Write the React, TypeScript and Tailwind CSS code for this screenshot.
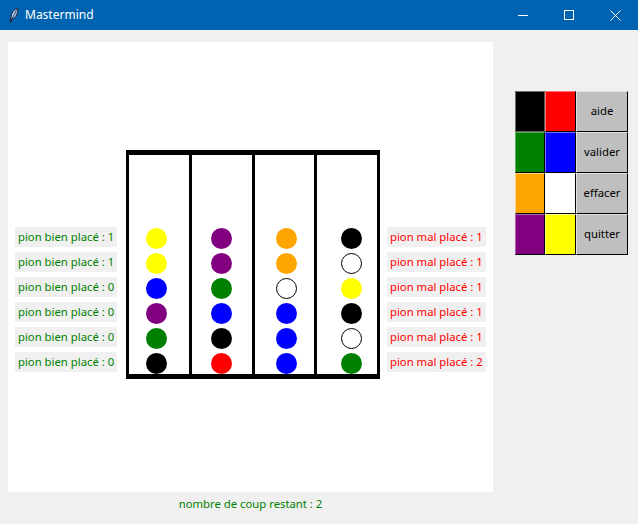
import React from 'react'

type Peg = 'yellow' | 'blue' | 'purple' | 'green' | 'black' | 'red' | 'orange' | 'white'

const pegClass: Record<Peg, string> = {
  yellow: 'bg-[#ffff00]',
  blue: 'bg-[#0000ff]',
  purple: 'bg-[#800080]',
  green: 'bg-[#008000]',
  black: 'bg-black',
  red: 'bg-[#ff0000]',
  orange: 'bg-[#ffa500]',
  white: 'bg-white border border-black',
}

// colonnes du plateau, de haut en bas
const columns: { pegs: Peg[]; cls: string }[] = [
  { pegs: ['yellow', 'yellow', 'blue', 'purple', 'green', 'black'], cls: 'w-[60px] pl-[17px]' },
  { pegs: ['purple', 'purple', 'green', 'blue', 'black', 'red'], cls: 'w-[63px] pl-[19px] border-l-[3px] border-black' },
  { pegs: ['orange', 'orange', 'white', 'blue', 'blue', 'blue'], cls: 'w-[62px] pl-[21px] border-l-[3px] border-black' },
  { pegs: ['black', 'white', 'yellow', 'black', 'white', 'green'], cls: 'w-[63px] pl-[24px] border-l-[3px] border-black' },
]

const bien = [1, 1, 0, 0, 0, 0]
const mal = [1, 1, 1, 1, 1, 2]

const swatchRows = [
  {
    a: 'bg-black border-t-[#6e6e6e] border-l-[#6e6e6e] border-r-[#5a5a5a] border-b-[#5a5a5a]',
    b: 'bg-[#ff0000] border-t-[#ff7070] border-l-[#ff7070] border-r-black border-b-black',
    label: 'aide',
  },
  {
    a: 'bg-[#008000] border-t-[#60b060] border-l-[#60b060] border-r-black border-b-black',
    b: 'bg-[#0000ff] border-t-[#7070ff] border-l-[#7070ff] border-r-black border-b-black',
    label: 'valider',
  },
  {
    a: 'bg-[#ffa500] border-t-[#ffd080] border-l-[#ffd080] border-r-black border-b-black',
    b: 'bg-white border-t-white border-l-white border-r-black border-b-black',
    label: 'effacer',
  },
  {
    a: 'bg-[#800080] border-t-[#b060b0] border-l-[#b060b0] border-r-black border-b-black',
    b: 'bg-[#ffff00] border-t-[#ffff90] border-l-[#ffff90] border-r-black border-b-black',
    label: 'quitter',
  },
]

function Feather() {
  return (
    <svg width="10" height="16" viewBox="0 0 10 16">
      <path d="M9 1 C5 2 2 6 2 11 L1 15 L2 15 L3 12 C7 11 9 6 9 1 Z" fill="#a9d3f5" stroke="#1a1a2e" strokeWidth="1" />
      <path d="M8 2 L2.5 13" stroke="#1a1a2e" strokeWidth="0.8" />
    </svg>
  )
}

export default function App() {
  return (
    <div
      className="w-[638px] h-[524px] overflow-hidden bg-[#f0f0f0]"
      style={{ fontFamily: '"Noto Sans", "Open Sans", sans-serif' }}
    >
      {/* barre de titre */}
      <div className="h-[30px] bg-[#0063b1] flex items-center text-white">
        <div className="w-[25px] flex justify-center pl-[2px]">
          <Feather />
        </div>
        <span className="text-[12px] leading-none">Mastermind</span>
        <div className="ml-auto flex h-full">
          <div className="w-[46px] flex items-center justify-center">
            <div className="w-[10px] h-px bg-white" />
          </div>
          <div className="w-[46px] flex items-center justify-center">
            <div className="w-[10px] h-[10px] border border-white" />
          </div>
          <div className="w-[46px] flex items-center justify-center">
            <svg width="11" height="11" viewBox="0 0 11 11">
              <path d="M0.5 0.5 L10.5 10.5 M10.5 0.5 L0.5 10.5" stroke="white" strokeWidth="1" />
            </svg>
          </div>
        </div>
      </div>

      <div className="flex items-start">
        <div className="ml-[8px] mt-[12px] flex flex-col">
          {/* canvas */}
          <div className="w-[485px] h-[450px] bg-white flex items-start pt-[108px]">
            <div className="ml-[7px] mt-[77px] flex flex-col gap-[5px]">
              {bien.map((n, i) => (
                <div key={i} className="h-[20px] w-[102px] bg-[#f0f0f0] pl-[3px] whitespace-nowrap text-[11.3px] leading-[20px] text-[#008000]">
                  pion bien placé : {n}
                </div>
              ))}
            </div>

            <div className="ml-[9px] w-[254px] h-[229px] border-x-[3px] border-t-[5px] border-b-[5px] border-black flex">
              {columns.map((c, i) => (
                <div key={i} className={`h-full flex flex-col justify-end gap-[4px] ${c.cls}`}>
                  {c.pegs.map((p, j) => (
                    <div key={j} className={`w-[21px] h-[21px] rounded-full ${pegClass[p]}`} />
                  ))}
                </div>
              ))}
            </div>

            <div className="ml-[7px] mt-[77px] flex flex-col gap-[5px]">
              {mal.map((n, i) => (
                <div key={i} className="h-[20px] w-[99px] bg-[#f0f0f0] pl-[3px] whitespace-nowrap text-[11.3px] leading-[20px] text-[#ff0000]">
                  pion mal placé : {n}
                </div>
              ))}
            </div>
          </div>

          <div className="mt-[2px] text-center whitespace-nowrap text-[11.3px] leading-[20px] text-[#008000]">
            nombre de coup restant : 2
          </div>
        </div>

        {/* palette et boutons */}
        <div className="ml-[22px] mt-[61px] grid grid-cols-[30px_31px_52px] auto-rows-[41px]">
          {swatchRows.map((r) => (
            <React.Fragment key={r.label}>
              <div className={`border ${r.a}`} />
              <div className={`border ${r.b}`} />
              <div className="border border-t-[#e3e3e3] border-l-[#e3e3e3] border-r-black border-b-black bg-[#bfbfbf] flex items-center justify-center text-[11.3px] text-black">
                {r.label}
              </div>
            </React.Fragment>
          ))}
        </div>
      </div>
    </div>
  )
}
